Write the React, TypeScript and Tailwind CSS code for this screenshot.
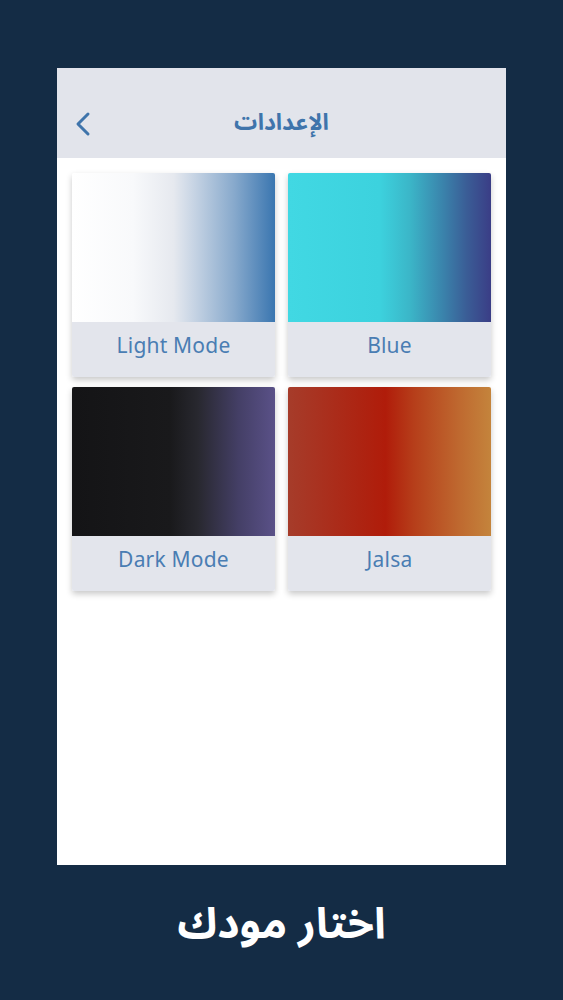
import React from 'react';

type Theme = {
  name: string;
  gradient: string;
};

const themes: Theme[] = [
  {
    name: 'Light Mode',
    gradient:
      'bg-[linear-gradient(90deg,#ffffff_0%,#f8f9fb_30%,#e6e9ef_50%,#c7d4e4_60%,#87a9cc_80%,#3a76b0_100%)]',
  },
  {
    name: 'Blue',
    gradient:
      'bg-[linear-gradient(90deg,#41d8e3_0%,#3cd2de_45%,#3bb6c8_60%,#3a84ac_76%,#3a5d96_88%,#3a3d86_100%)]',
  },
  {
    name: 'Dark Mode',
    gradient:
      'bg-[linear-gradient(90deg,#141416_0%,#19191b_48%,#28282f_62%,#443f66_82%,#5a5188_100%)]',
  },
  {
    name: 'Jalsa',
    gradient:
      'bg-[linear-gradient(90deg,#a63c2a_0%,#ad2412_35%,#b01c0a_48%,#b63e1a_62%,#bf6a30_85%,#c4843c_100%)]',
  },
];

const arabic = { fontFamily: '"Noto Sans Arabic", "DejaVu Sans", sans-serif' };

function ThemeCard({ theme }: { theme: Theme }) {
  return (
    <div className="flex flex-col rounded-[2px] overflow-hidden shadow-[0_3px_6px_rgba(0,0,0,0.22)]">
      <div className={`h-[149px] ${theme.gradient}`} />
      <div className="h-[55px] bg-[#e3e5ec] flex items-center justify-center pb-[7px]">
        <span
          className="text-[21px] text-[#4a7db3] tracking-[0.2px]"
          style={{ fontFamily: '"Noto Sans", "Open Sans", sans-serif' }}
        >
          {theme.name}
        </span>
      </div>
    </div>
  );
}

export default function App() {
  return (
    <div className="min-h-[1000px] w-full bg-[#142c45] pt-[68px] flex flex-col items-center">
      <div className="w-[449px] h-[797px] bg-white flex flex-col">
        <div className="h-[90px] bg-[#e2e4eb] relative flex items-center justify-center">
          <button className="absolute left-[17px] top-[43px] text-[#3f74ab]">
            <svg width="20" height="26" viewBox="0 0 20 26" fill="none">
              <path
                d="M14 3 L4 13 L14 23"
                stroke="currentColor"
                strokeWidth="3"
                strokeLinecap="round"
                strokeLinejoin="round"
              />
            </svg>
          </button>
          <h1
            dir="rtl"
            className="mt-[20px] text-[23px] font-bold text-[#3f74ab]"
            style={arabic}
          >
            الإعدادات
          </h1>
        </div>
        <div className="grid grid-cols-2 gap-x-[13px] gap-y-[10px] px-[15px] pt-[15px]">
          {themes.map((t) => (
            <ThemeCard key={t.name} theme={t} />
          ))}
        </div>
      </div>
      <div
        dir="rtl"
        className="mt-[30px] text-[43px] font-bold text-white leading-[60px]"
        style={arabic}
      >
        اختار مودك
      </div>
    </div>
  );
}
